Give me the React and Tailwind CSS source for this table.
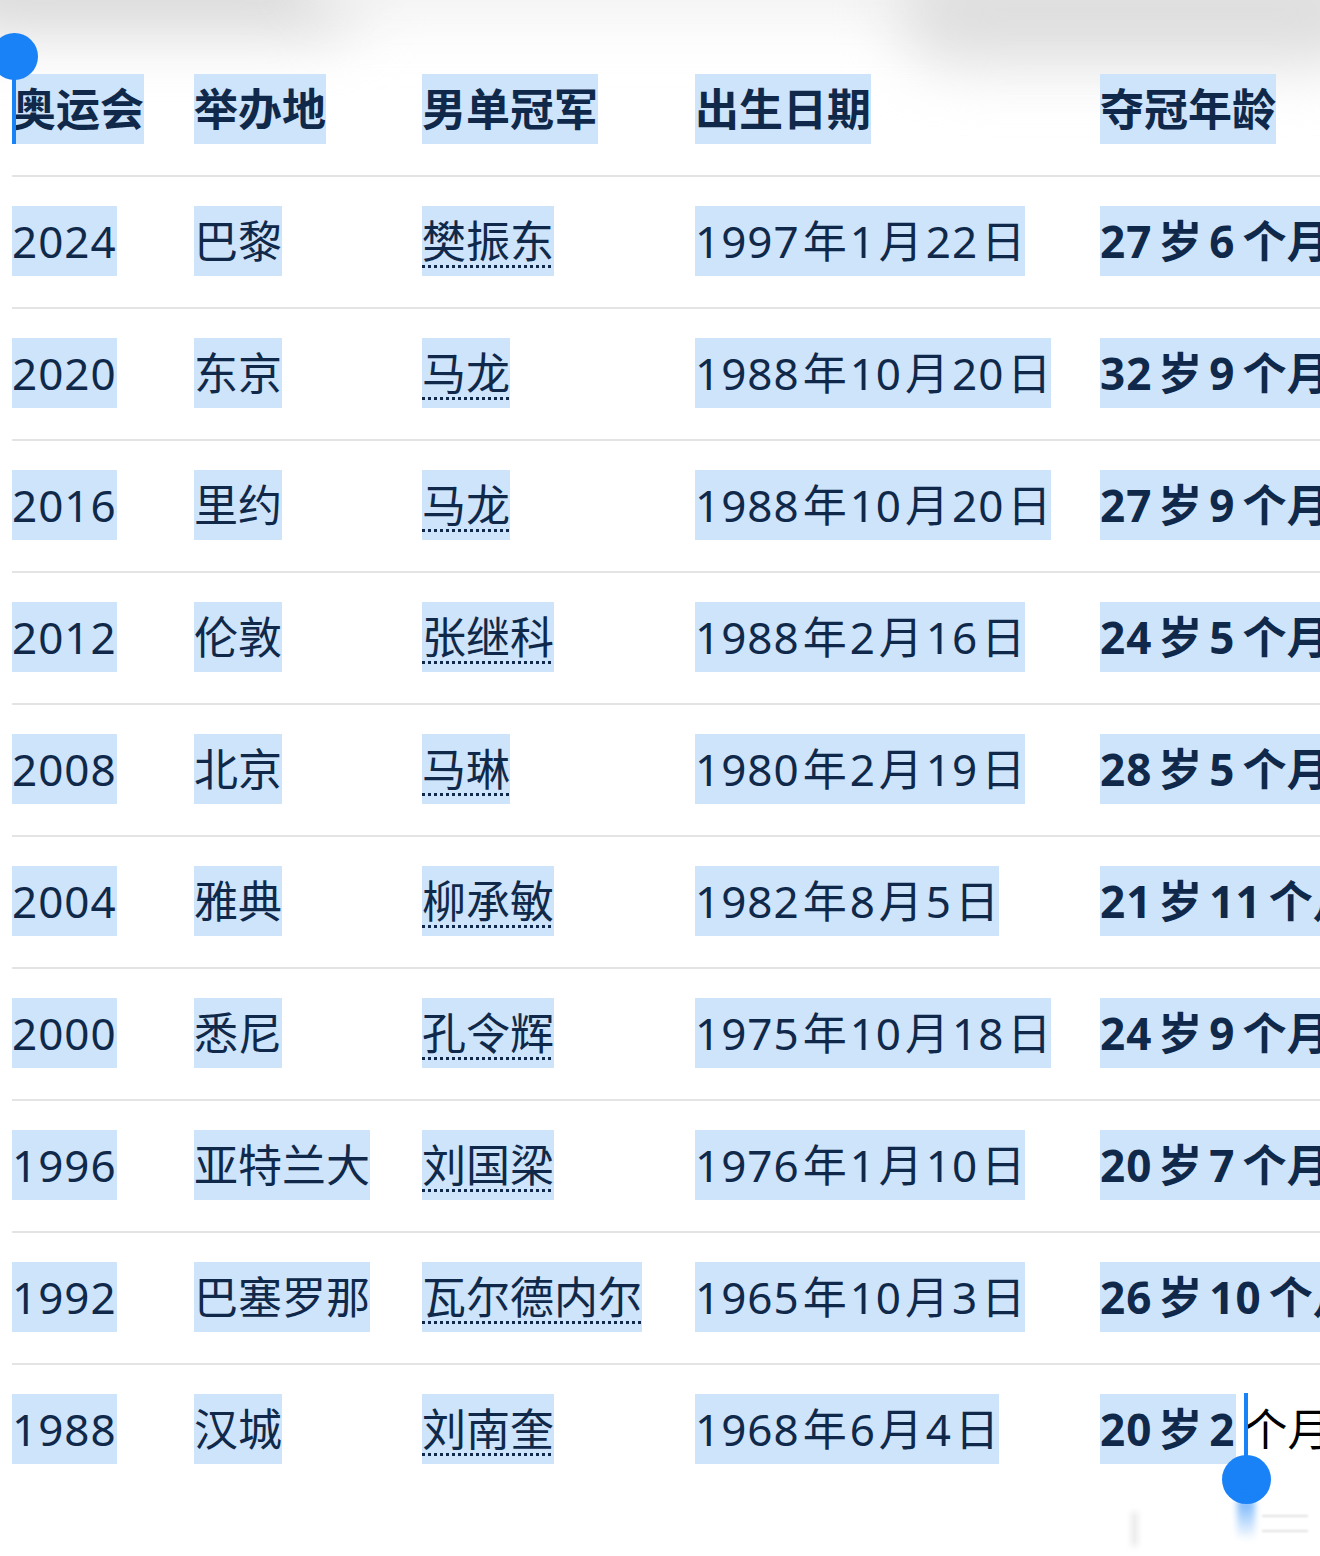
import React from "react";

const rows = [
  ["2024", "巴黎", "樊振东", "1997年1月22日", "27岁6个月"],
  ["2020", "东京", "马龙", "1988年10月20日", "32岁9个月"],
  ["2016", "里约", "马龙", "1988年10月20日", "27岁9个月"],
  ["2012", "伦敦", "张继科", "1988年2月16日", "24岁5个月"],
  ["2008", "北京", "马琳", "1980年2月19日", "28岁5个月"],
  ["2004", "雅典", "柳承敏", "1982年8月5日", "21岁11个月"],
  ["2000", "悉尼", "孔令辉", "1975年10月18日", "24岁9个月"],
  ["1996", "亚特兰大", "刘国梁", "1976年1月10日", "20岁7个月"],
  ["1992", "巴塞罗那", "瓦尔德内尔", "1965年10月3日", "26岁10个月"],
  ["1988", "汉城", "刘南奎", "1968年6月4日", "20岁2个月"],
];

const cols = "grid grid-cols-[182px_228px_273px_405px_400px]";

// digits and CJK get a small gap between them, like the phone's autospace
const gaps = {
  sm: { start: "mr-[3px]", mid: "mx-[3px]", end: "ml-[3px]" },
  lg: { start: "mr-[6px]", mid: "mx-[7px]", end: "ml-[7px]" },
};

function Spaced({ text, gap = "sm" }) {
  const g = gaps[gap];
  const parts = text.split(/(\d+)/).filter((p) => p !== "");
  return parts.map((p, i) => {
    if (!/\d/.test(p)) return <span key={i}>{p}</span>;
    const first = i === 0;
    const last = i === parts.length - 1;
    const cls = first && last ? "" : first ? g.start : last ? g.end : g.mid;
    return (
      <span key={i} className={"tracking-[1px] " + cls}>
        {p}
      </span>
    );
  });
}

function Mark({ children, className = "" }) {
  return (
    <span className={"inline-block h-[70px] leading-[70px] bg-[#cde4fa] whitespace-nowrap " + className}>
      {children}
    </span>
  );
}

export default function App() {
  return (
    <div
      className="relative w-[1320px] h-[1556px] overflow-hidden bg-white text-[#10294a] text-[44px]"
      style={{ fontFamily: '"Noto Sans", "Noto Sans CJK SC", sans-serif' }}
    >
      {/* shadow of the menu above */}
      <div className="absolute -top-[55px] -left-[60px] w-[420px] h-[90px] rounded-full bg-[#dadada] blur-[30px]" />
      <div className="absolute -top-[55px] left-[300px] w-[700px] h-[70px] rounded-full bg-[#f0f0f0] blur-[30px]" />
      <div className="absolute -top-[45px] right-[-60px] w-[480px] h-[110px] rounded-full bg-[#dedede] blur-[30px]" />

      <div className="relative pt-[45px] pl-[12px] whitespace-nowrap">
        {/* header */}
        <div className={cols + " pt-[29px] pb-[31px] border-b-2 border-[#e4e4e4] font-bold"}>
          <div><Mark>奥运会</Mark></div>
          <div><Mark>举办地</Mark></div>
          <div><Mark>男单冠军</Mark></div>
          <div><Mark>出生日期</Mark></div>
          <div><Mark>夺冠年龄</Mark></div>
        </div>

        {rows.map((r, i) => {
          const last = i === rows.length - 1;
          return (
            <div
              key={r[0]}
              className={cols + " pt-[29px] pb-[31px] " + (last ? "" : "border-b-2 border-[#e4e4e4]")}
            >
              <div><Mark><Spaced text={r[0]} /></Mark></div>
              <div><Mark>{r[1]}</Mark></div>
              <div>
                <Mark className="underline decoration-dotted decoration-[3px] underline-offset-[7px]">{r[2]}</Mark>
              </div>
              <div><Mark><Spaced text={r[3]} /></Mark></div>
              <div className="font-bold">
                {last ? (
                  <>
                    <Mark><Spaced text="20岁2" gap="lg" /></Mark>
                    <span className="ml-[8px] text-black font-normal">个月</span>
                  </>
                ) : (
                  <Mark><Spaced text={r[4]} gap="lg" /></Mark>
                )}
              </div>
            </div>
          );
        })}
      </div>

      {/* selection handles */}
      <div className="absolute left-[12px] top-[57px] w-[4px] h-[87px] bg-[#1a82f7]" />
      <div className="absolute -left-[9px] top-[33px] w-[47px] h-[47px] rounded-full bg-[#1a82f7]" />

      <div className="absolute left-[1244px] top-[1393px] w-[4px] h-[86px] bg-[#1a82f7]" />
      <div className="absolute left-[1222px] top-[1455px] w-[49px] h-[49px] rounded-full bg-[#1a82f7]" />

      {/* faded loupe ghost */}
      <div className="absolute left-[1237px] top-[1500px] w-[18px] h-[40px] bg-gradient-to-b from-[#1a82f7]/60 to-transparent blur-[3px]" />
      <div className="absolute left-[1132px] top-[1512px] w-[5px] h-[34px] bg-[#e2e2e2] blur-[3px]" />
      <div className="absolute left-[1262px] top-[1515px] w-[46px] h-[2px] bg-[#e0e0e0] blur-[1px]" />
      <div className="absolute left-[1262px] top-[1530px] w-[46px] h-[2px] bg-[#e0e0e0] blur-[1px]" />
    </div>
  );
}
